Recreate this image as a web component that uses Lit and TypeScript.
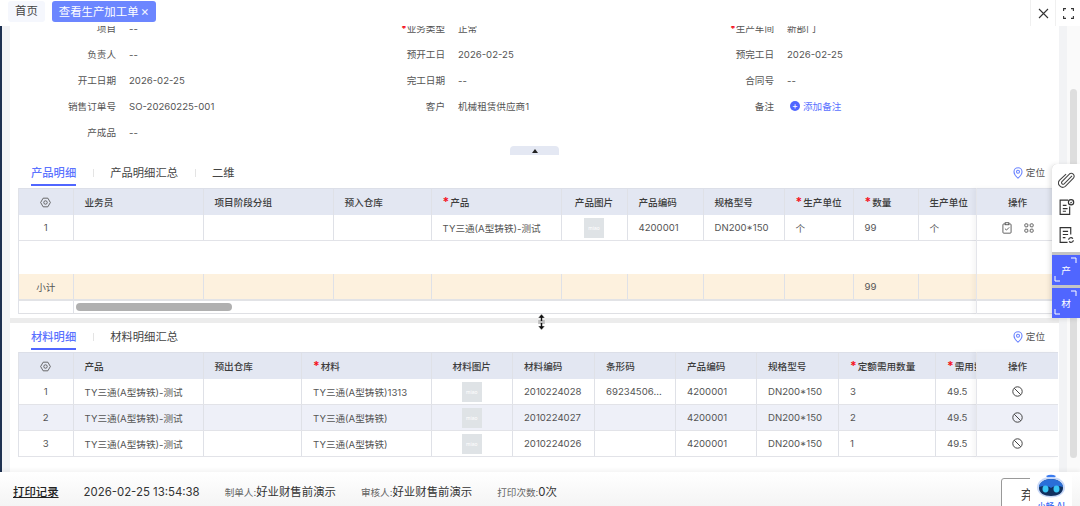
import { LitElement, html, css, svg, nothing } from "lit"
import { customElement, property } from "lit/decorators.js"

const FONT = css`
  :host {
    font-family: "Inter", "Noto Sans CJK SC", sans-serif;
  }
`

type Col = { label: string; w: number; req?: boolean; center?: boolean }

const gearIcon = html`<svg width="11" height="11" viewBox="0 0 14 14" fill="none" stroke="#555" stroke-width="1.1">
  <path d="M4 1.500h6l3.200 5.500L10 12.500H4L.8 7z" />
  <circle cx="7" cy="7" r="2.200" />
</svg>`

const checkIcon = html`<svg width="10" height="12" viewBox="0 0 11 13" fill="none" stroke="#555" stroke-width="1">
  <rect x="1" y="2" width="9" height="10.200" rx="1" />
  <rect x="3.500" y=".7" width="4" height="2.200" fill="#fff" />
  <path d="M3.200 7.200l1.700 1.600 3-3" />
</svg>`

const gridIcon = html`<svg width="10" height="10" viewBox="0 0 12 12" fill="none" stroke="#555" stroke-width="1.100">
  <rect x="1" y="1" width="3.600" height="3.600" rx="1" />
  <rect x="7.400" y="1" width="3.600" height="3.600" rx="1" />
  <rect x="1" y="7.400" width="3.600" height="3.600" rx="1" />
  <rect x="7.400" y="7.400" width="3.600" height="3.600" rx="1" />
</svg>`

const banIcon = html`<svg width="11" height="11" viewBox="0 0 11 11" fill="none" stroke="#444" stroke-width="1">
  <circle cx="5.500" cy="5.500" r="4.700" />
  <path d="M2.200 2.200l6.600 6.600" />
</svg>`

const pinIcon = html`<svg width="10" height="12" viewBox="0 0 10 12" fill="none" stroke="#6b84ff" stroke-width="1.100">
  <path d="M5 11.200C2.600 9.200 1 7.200 1 4.800a4 4 0 0 1 8 0c0 2.400-1.600 4.400-4 6.400z" />
  <circle cx="5" cy="4.800" r="1.500" />
</svg>`

@customElement("detail-table")
class DetailTable extends LitElement {
  static styles = [
    FONT,
    css`
      :host {
        display: block;
        margin: 0 1px 0 8px;
        font-size: 9.6px;
        color: #555;
      }
      .wrap {
        display: flex;
        border-left: 1px solid #e0e2e8;
      }
      .scroller {
        flex: 1;
        min-width: 0;
        overflow: hidden;
      }
      .row {
        display: grid;
        height: 26px;
        box-sizing: border-box;
        border-bottom: 1px solid #e2e3e8;
      }
      .row.head {
        height: 27px;
        background: #e3e7f2;
        border-top: 1px solid #dcdfe8;
        border-bottom: none;
        color: #3c3c3c;
        font-weight: 500;
      }
      .row.alt {
        background: #eef0f8;
      }
      .row.total {
        background: #fdf1de;
        border-bottom: 2px solid #e2e3e6;
        height: 27px;
      }
      .cell {
        display: flex;
        align-items: center;
        padding: 0 6px 0 11px;
        box-sizing: border-box;
        border-right: 1px solid #dfe1e7;
        white-space: nowrap;
        overflow: hidden;
      }
      .cell.center {
        justify-content: center;
        padding: 0;
      }
      .star {
        color: #f5121d;
        font-size: 12px;
        line-height: 12px;
        font-weight: 700;
        margin-right: 1px;
      }
      .thumb {
        width: 20px;
        height: 20px;
        background: #dfe3e6;
        color: #fff;
        font-size: 5px;
        line-height: 20px;
        text-align: center;
        overflow: hidden;
      }
      .blank {
        height: 33px;
      }
      .bar {
        height: 13px;
        box-sizing: border-box;
        border-bottom: 1px solid #dfe0e4;
        display: flex;
        align-items: center;
      }
      .bar .lead {
        width: 55px;
        height: 100%;
        box-sizing: border-box;
        border-right: 1px solid #dfe1e7;
      }
      .thumbbar {
        width: 156px;
        height: 8px;
        margin-left: 2px;
        border-radius: 4px;
        background: #b0b0b0;
      }
      .op {
        flex: 0 0 81px;
        position: relative;
        border-left: 1px solid #e4e5ea;
        box-shadow: -3px 0 4px rgba(0, 0, 0, 0.04);
      }
      .op .row {
        display: flex;
      }
      .op .cell {
        flex: 1;
        border-right: none;
        justify-content: center;
        padding: 0;
        gap: 12px;
      }
    `,
  ]

  @property({ attribute: false }) cols: Col[] = []
  @property({ attribute: false }) rows: unknown[][] = []
  @property({ attribute: false }) ops: unknown[] = []
  @property({ type: Boolean }) striped = false
  @property({ attribute: false }) total: string[] | null = null
  @property({ type: Boolean }) scrollbar = false

  render() {
    const tpl = this.cols.map((c) => c.w + "px").join(" ")
    const width = this.cols.reduce((s, c) => s + c.w, 0)
    const gridStyle = `grid-template-columns:${tpl};width:${width}px`
    return html`<div class="wrap">
      <div class="scroller">
        <div class="row head" style=${gridStyle}>
          ${this.cols.map(
            (c, i) => html`<div class="cell ${c.center ? "center" : ""}">
              ${c.req ? html`<span class="star">*</span>` : nothing}${i === 0 ? gearIcon : c.label}
            </div>`,
          )}
        </div>
        ${this.rows.map(
          (r, ri) => html`<div class="row ${this.striped && ri % 2 === 1 ? "alt" : ""}" style=${gridStyle}>
            ${r.map((v, i) => html`<div class="cell ${this.cols[i].center ? "center" : ""}">${v}</div>`)}
          </div>`,
        )}
        ${this.total
          ? html`<div class="blank"></div>
              <div class="row total" style=${gridStyle}>
                ${this.total.map((v, i) => html`<div class="cell ${this.cols[i].center ? "center" : ""}">${v}</div>`)}
              </div>`
          : nothing}
        ${this.scrollbar
          ? html`<div class="bar">
              <div class="lead"></div>
              <div class="thumbbar"></div>
            </div>`
          : nothing}
      </div>
      <div class="op">
        <div class="row head"><div class="cell">操作</div></div>
        ${this.ops.map((o, i) => html`<div class="row ${this.striped && i % 2 === 1 ? "alt" : ""}"><div class="cell">${o}</div></div>`)}
        ${this.total
          ? html`<div class="blank"></div>
              <div class="row total"><div class="cell"></div></div>`
          : nothing}
        ${this.scrollbar ? html`<div class="bar"></div>` : nothing}
      </div>
    </div>`
  }
}

@customElement("tab-strip")
class TabStrip extends LitElement {
  static styles = [
    FONT,
    css`
      :host {
        display: flex;
        align-items: flex-start;
        padding: 0 14px 0 21px;
        margin-bottom: 2px;
        color: #444;
        font-size: 11.3px;
      }
      .tab {
        padding-top: 3px;
        line-height: 22px;
        border-bottom: 2px solid transparent;
      }
      .tab.on {
        color: #5b72ff;
        font-weight: 500;
        border-bottom-color: #5066ff;
      }
      .sep {
        width: 1px;
        height: 8px;
        margin: 10px 16.5px 0;
        background: #e4e4e4;
      }
      .locate {
        margin: 6px 0 0 auto;
        display: flex;
        align-items: center;
        gap: 3px;
        font-size: 9.6px;
        line-height: 16px;
        color: #555;
      }
    `,
  ]

  @property({ attribute: false }) tabs: string[] = []

  render() {
    return html`${this.tabs.map(
        (t, i) => html`${i > 0 ? html`<div class="sep"></div>` : nothing}<div class="tab ${i === 0 ? "on" : ""}">${t}</div>`,
      )}
      <div class="locate">${pinIcon}定位</div>`
  }
}

const photo = html`<div class="thumb">miao</div>`
const PRODUCT = "TY三通(A型铸铁)-测试"

const productCols: Col[] = [
  { label: "", w: 54.5, center: true },
  { label: "业务员", w: 130 },
  { label: "项目阶段分组", w: 130 },
  { label: "预入仓库", w: 98 },
  { label: "产品", w: 130, req: true },
  { label: "产品图片", w: 66, center: true },
  { label: "产品编码", w: 76 },
  { label: "规格型号", w: 81 },
  { label: "生产单位", w: 69, req: true },
  { label: "数量", w: 65, req: true },
  { label: "生产单位", w: 66 },
]

const materialCols: Col[] = [
  { label: "", w: 54.5, center: true },
  { label: "产品", w: 130 },
  { label: "预出仓库", w: 98.5 },
  { label: "材料", w: 129.5, req: true },
  { label: "材料图片", w: 81.5, center: true },
  { label: "材料编码", w: 82 },
  { label: "条形码", w: 81 },
  { label: "产品编码", w: 81 },
  { label: "规格型号", w: 82 },
  { label: "定额需用数量", w: 97, req: true },
  { label: "需用数量", w: 82, req: true },
]

const form = [
  ["项目", "--", "业务类型", "正常", "生产车间", "新部门"],
  ["负责人", "--", "预开工日", "2026-02-25", "预完工日", "2026-02-25"],
  ["开工日期", "2026-02-25", "完工日期", "--", "合同号", "--"],
  ["销售订单号", "SO-20260225-001", "客户", "机械租赁供应商1", "备注", "添加备注"],
  ["产成品", "--"],
]

const corners = svg`<path d="M19 3h5v5M3 21v5h5" fill="none" stroke="#fff" stroke-width="1" />`

@customElement("app-root")
class AppRoot extends LitElement {
  static styles = [
    FONT,
    css`
      :host {
        display: flex;
        flex-direction: column;
        position: relative;
        width: 1080px;
        height: 506px;
        overflow: hidden;
        background: #fff;
        color: #555;
        font-size: 9.6px;
      }
      .top {
        flex: 0 0 26px;
        display: flex;
        align-items: flex-start;
        gap: 7px;
        padding: 1px 0 0 8px;
        box-sizing: border-box;
        position: relative;
        z-index: 2;
        background: #fff;
      }
      .page-tab {
        height: 21px;
        line-height: 21px;
        padding: 0 7px;
        border-radius: 3px;
        font-size: 11.4px;
        color: #444;
        background: #f5f7fd;
      }
      .page-tab.on {
        color: #fff;
        background: #6c86ff;
      }
      .x {
        margin-left: 2px;
        font-size: 13px;
        opacity: 0.9;
      }
      .win {
        margin: -1px 0 0 auto;
        display: flex;
      }
      .win div {
        width: 24px;
        height: 26px;
        display: flex;
        align-items: center;
        justify-content: center;
        border-left: 1px solid #f0f0f0;
      }
      .body {
        flex: 1;
        min-height: 0;
        display: flex;
      }
      .gutter {
        flex: 0 0 10px;
        box-sizing: border-box;
        border-left: 2px solid #1d3050;
        background: #f2f3f5;
      }
      .main {
        flex: 1;
        min-width: 0;
        overflow: hidden;
        background: #fff;
      }
      .rail {
        flex: 0 0 21px;
        display: flex;
        background: #f2f3f5;
      }
      .track {
        margin-left: 8px;
        flex: 1;
        background: #fafafa;
        padding: 63px 3px 0 3px;
      }
      .track div {
        height: 369px;
        border-radius: 4px;
        background: #dedede;
      }
      .form {
        margin-top: -11px;
        display: grid;
        grid-template-columns: repeat(3, 329px);
        grid-auto-rows: 26px;
      }
      .field {
        display: flex;
        align-items: center;
        gap: 13px;
        white-space: nowrap;
      }
      .field label {
        width: 106px;
        text-align: right;
      }
      .star {
        color: #f5121d;
        font-weight: 700;
      }
      .add {
        display: flex;
        align-items: center;
        gap: 3px;
        margin-left: 3px;
        color: #5b72ff;
      }
      .dot {
        width: 10px;
        height: 10px;
        border-radius: 50%;
        background: #5066ff;
        color: #fff;
        font-size: 9px;
        line-height: 10px;
        text-align: center;
      }
      .fold {
        width: 49px;
        height: 9px;
        margin: 1px 0 0 500px;
        border-radius: 4px 4px 0 0;
        background: #e4e8f3;
        display: flex;
        align-items: center;
        justify-content: center;
      }
      .fold i {
        border: 3px solid transparent;
        border-top: none;
        border-bottom: 4px solid #222;
      }
      .first {
        padding-top: 4px;
        height: 159px;
      }
      .band {
        height: 5px;
        background: #ececec;
      }
      .cursor {
        position: absolute;
        left: 536px;
        top: 314px;
        z-index: 3;
      }
      .tools {
        position: absolute;
        right: 0;
        top: 164px;
        width: 28px;
        z-index: 3;
        display: flex;
        flex-direction: column;
        gap: 3px;
        background: #c4c4c4;
        border-radius: 5px 0 0 0;
        box-shadow: -2px 1px 5px rgba(0, 0, 0, 0.12);
      }
      .white {
        height: 88px;
        display: flex;
        flex-direction: column;
        align-items: center;
        justify-content: space-around;
        background: #fff;
        border-radius: 5px 0 0 0;
        padding: 3px 0;
        box-sizing: border-box;
      }
      .blue {
        height: 30px;
        position: relative;
        display: flex;
        align-items: center;
        justify-content: center;
        background: #5066ff;
        color: #fff;
        font-size: 9.6px;
      }
      .blue svg {
        position: absolute;
        inset: 0;
      }
      .foot {
        flex: 0 0 34px;
        display: flex;
        gap: 25px;
        padding-left: 13px;
        overflow: hidden;
        position: relative;
        z-index: 2;
        background: linear-gradient(#fff, #f4f4f4);
        box-shadow: 0 -2px 4px rgba(0, 0, 0, 0.05);
        white-space: nowrap;
        font-size: 11.4px;
        color: #333;
      }
      .foot > span {
        margin-top: 12px;
        line-height: 16px;
      }
      .foot small {
        font-size: 9.6px;
        color: #666;
      }
      .foot b {
        font-weight: 500;
        color: #222;
        text-decoration: underline;
      }
      .btn {
        position: absolute;
        left: 1001px;
        top: 6px;
        width: 70px;
        height: 40px;
        box-sizing: border-box;
        border: 1px solid #999;
        border-radius: 3px;
        padding: 5px 0 0 19px;
        font-size: 13px;
        color: #444;
        background: #fff;
      }
      .ai {
        position: absolute;
        left: 1030px;
        top: 472px;
        width: 42px;
        height: 40px;
        z-index: 4;
        border-radius: 4px;
        background: #fff;
        text-align: center;
        font-size: 8.5px;
        line-height: 10px;
        font-weight: 500;
        color: #3a6ef5;
        white-space: nowrap;
      }
      .ai svg {
        display: block;
        margin: 2px auto 2px;
      }
    `,
  ]

  render() {
    const productRows = [["1", "", "", "", PRODUCT, photo, "4200001", "DN200*150", "个", "99", "个"]]
    const materialRows = [
      ["1", PRODUCT, "", "TY三通(A型铸铁)1313", photo, "2010224028", "69234506...", "4200001", "DN200*150", "3", "49.5"],
      ["2", PRODUCT, "", "TY三通(A型铸铁)", photo, "2010224027", "", "4200001", "DN200*150", "2", "49.5"],
      ["3", PRODUCT, "", "TY三通(A型铸铁)", photo, "2010224026", "", "4200001", "DN200*150", "1", "49.5"],
    ]
    return html`
      <div class="top">
        <div class="page-tab">首页</div>
        <div class="page-tab on">查看生产加工单<span class="x">×</span></div>
        <div class="win">
          <div>
            <svg width="11" height="11" viewBox="0 0 11 11" stroke="#333" stroke-width="1.100"><path d="M1 1l9 9M10 1l-9 9" /></svg>
          </div>
          <div>
            <svg width="11" height="11" viewBox="0 0 11 11" fill="none" stroke="#333" stroke-width="1.100">
              <path d="M.6 3V.6H3M8 .6h2.400V3M10.400 8v2.400H8M3 10.400H.6V8" />
            </svg>
          </div>
        </div>
      </div>
      <div class="body">
        <div class="gutter"></div>
        <div class="main">
          <div class="form">${form.map((r, i) => this.renderRow(r, i))}</div>
          <div class="fold"><i></i></div>
          <div class="first">
            <tab-strip .tabs=${["产品明细", "产品明细汇总", "二维"]}></tab-strip>
            <detail-table
              .cols=${productCols}
              .rows=${productRows}
              .ops=${[html`${checkIcon}${gridIcon}`]}
              .total=${["小计", "", "", "", "", "", "", "", "", "99", ""]}
              scrollbar
            ></detail-table>
          </div>
          <div class="band"></div>
          <tab-strip .tabs=${["材料明细", "材料明细汇总"]}></tab-strip>
          <detail-table
            .cols=${materialCols}
            .rows=${materialRows}
            .ops=${[banIcon, banIcon, banIcon]}
            striped
          ></detail-table>
        </div>
        <div class="rail">
          <div class="track"><div></div></div>
        </div>
      </div>
      <div class="foot">
        <span><b>打印记录</b></span>
        <span>2026-02-25 13:54:38</span>
        <span><small>制单人:</small>好业财售前演示</span>
        <span><small>审核人:</small>好业财售前演示</span>
        <span><small>打印次数:</small>0次</span>
        <div class="btn">弃审</div>
      </div>
      <svg class="cursor" width="11" height="16" viewBox="0 0 11 16" fill="#111" stroke="#fff" stroke-width=".5">
        <path d="M5.500 0L9 4H6.500v2.500H9v1H2v-1h2.500V4H2zM2 8.500h7v1H6.500V12H9l-3.500 4L2 12h2.500V9.500H2z" />
      </svg>
      <div class="tools">
        <div class="white">
          <svg width="17" height="17" viewBox="0 0 16 16" fill="none" stroke="#444" stroke-width="1">
            <path d="M13.200 3.600l-7.400 7.600a1.500 1.500 0 0 1-2.100-2.100l7-7.200a2.700 2.700 0 0 1 3.800 3.800l-7.600 7.800a4 4 0 0 1-5.600-5.600L7.600 2" />
          </svg>
          <svg width="17" height="18" viewBox="0 0 16 17" fill="none" stroke="#333" stroke-width="1.100">
            <path d="M9.500 2H2v13.500h9V8M4.500 7h3.500M4.500 10h4.500M4.500 12.500h3" />
            <circle cx="12.300" cy="4" r="2.500" />
            <path d="M11.300 4l1 1 1-1.600" stroke-width=".8" />
          </svg>
          <svg width="17" height="18" viewBox="0 0 16 17" fill="none" stroke="#333" stroke-width="1.100">
            <path d="M12 8V1.500H2v14h7M4.500 5h5M4.500 8h5M4.500 11h2.500" />
            <path d="M10 13a2.200 2.200 0 0 1 4-1M14.500 13.500a2.200 2.200 0 0 1-4 1" />
          </svg>
        </div>
        <div class="blue"><svg width="28" height="30">${corners}</svg>产</div>
        <div class="blue"><svg width="28" height="30">${corners}</svg>材</div>
      </div>
      <div class="ai">
        <svg width="32" height="25" viewBox="0 0 32 25">
          <path d="M11 2q5-2.500 10 0l-1.500 1.500h-7z" fill="#3a7bf0" />
          <path d="M16 3c9 0 14 5 14 10.500 0 6-6 10-14 10S2 19.500 2 13.500C2 8 7 3 16 3z" fill="#c9d9f8" />
          <path d="M16 5c7 0 12 4 12 9 0 5-5 8-12 8S4 19 4 14c0-5 5-9 12-9z" fill="#10305f" />
          <path d="M16 5c7 0 12 4 12 8-4-1-8-2-12 1-4-3-8-2-12-1 0-4 5-8 12-8z" fill="#2a6fd8" />
          <ellipse cx="10.500" cy="15" rx="3" ry="3.400" fill="#39c6f5" />
          <ellipse cx="21.500" cy="15" rx="3" ry="3.400" fill="#39c6f5" />
        </svg>
        小畅 AI
      </div>
    `
  }

  renderRow(r: string[], rowIndex: number) {
    const cells = []
    for (let i = 0; i < r.length; i += 2) {
      const req = rowIndex === 0 && i > 0
      const isAdd = r[i + 1] === "添加备注"
      cells.push(html`<div class="field">
        <label>${req ? html`<span class="star">*</span>` : nothing}${r[i]}</label>
        ${isAdd ? html`<span class="add"><span class="dot">+</span>${r[i + 1]}</span>` : html`<span>${r[i + 1]}</span>`}
      </div>`)
    }
    return cells
  }
}
